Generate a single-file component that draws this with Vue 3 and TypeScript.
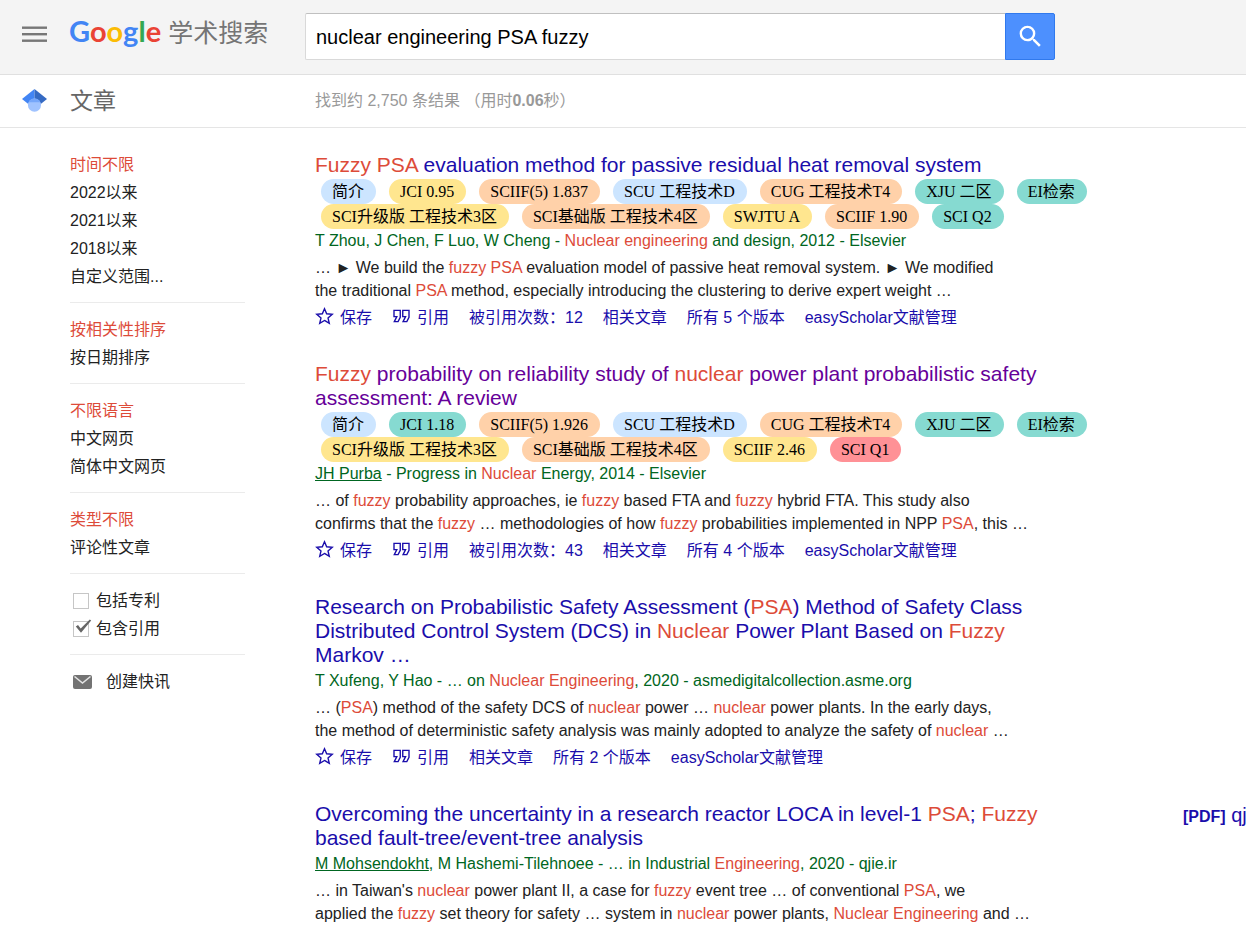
<script setup lang="ts">
interface Tag { label: string; tone: 'blue' | 'yellow' | 'orange' | 'teal' | 'pink' }
interface Result {
  title: string[]
  visited?: boolean
  tags?: Tag[]
  byline: string
  snippet: string[]
  actions?: string[]
  pdf?: string
}
interface Part { text: string; kind: '' | 'hl' | 'author' }

const query = 'nuclear engineering PSA fuzzy'
const logo = [['G', 'b'], ['o', 'r'], ['o', 'y'], ['g', 'b'], ['l', 'g'], ['e', 'r']]

const filterGroups: string[][] = [
  ['时间不限', '2022以来', '2021以来', '2018以来', '自定义范围...'],
  ['按相关性排序', '按日期排序'],
  ['不限语言', '中文网页', '简体中文网页'],
  ['类型不限', '评论性文章'],
]

const results: Result[] = [
  {
    title: ['*Fuzzy PSA* evaluation method for passive residual heat removal system'],
    tags: [
      { label: '简介', tone: 'blue' },
      { label: 'JCI 0.95', tone: 'yellow' },
      { label: 'SCIIF(5) 1.837', tone: 'orange' },
      { label: 'SCU 工程技术D', tone: 'blue' },
      { label: 'CUG 工程技术T4', tone: 'orange' },
      { label: 'XJU 二区', tone: 'teal' },
      { label: 'EI检索', tone: 'teal' },
      { label: 'SCI升级版 工程技术3区', tone: 'yellow' },
      { label: 'SCI基础版 工程技术4区', tone: 'orange' },
      { label: 'SWJTU A', tone: 'yellow' },
      { label: 'SCIIF 1.90', tone: 'orange' },
      { label: 'SCI Q2', tone: 'teal' },
    ],
    byline: 'T Zhou, J Chen, F Luo, W Cheng - *Nuclear engineering* and design, 2012 - Elsevier',
    snippet: [
      '… ► We build the *fuzzy PSA* evaluation model of passive heat removal system. ► We modified',
      'the traditional *PSA* method, especially introducing the clustering to derive expert weight …',
    ],
    actions: ['被引用次数：12', '相关文章', '所有 5 个版本', 'easyScholar文献管理'],
  },
  {
    title: ['*Fuzzy* probability on reliability study of *nuclear* power plant probabilistic safety', 'assessment: A review'],
    visited: true,
    tags: [
      { label: '简介', tone: 'blue' },
      { label: 'JCI 1.18', tone: 'teal' },
      { label: 'SCIIF(5) 1.926', tone: 'orange' },
      { label: 'SCU 工程技术D', tone: 'blue' },
      { label: 'CUG 工程技术T4', tone: 'orange' },
      { label: 'XJU 二区', tone: 'teal' },
      { label: 'EI检索', tone: 'teal' },
      { label: 'SCI升级版 工程技术3区', tone: 'yellow' },
      { label: 'SCI基础版 工程技术4区', tone: 'orange' },
      { label: 'SCIIF 2.46', tone: 'yellow' },
      { label: 'SCI Q1', tone: 'pink' },
    ],
    byline: '_JH Purba_ - Progress in *Nuclear* Energy, 2014 - Elsevier',
    snippet: [
      '… of *fuzzy* probability approaches, ie *fuzzy* based FTA and *fuzzy* hybrid FTA. This study also',
      'confirms that the *fuzzy* … methodologies of how *fuzzy* probabilities implemented in NPP *PSA*, this …',
    ],
    actions: ['被引用次数：43', '相关文章', '所有 4 个版本', 'easyScholar文献管理'],
  },
  {
    title: [
      'Research on Probabilistic Safety Assessment (*PSA*) Method of Safety Class',
      'Distributed Control System (DCS) in *Nuclear* Power Plant Based on *Fuzzy*',
      'Markov …',
    ],
    byline: 'T Xufeng, Y Hao - … on *Nuclear Engineering*, 2020 - asmedigitalcollection.asme.org',
    snippet: [
      '… (*PSA*) method of the safety DCS of *nuclear* power … *nuclear* power plants. In the early days,',
      'the method of deterministic safety analysis was mainly adopted to analyze the safety of *nuclear* …',
    ],
    actions: ['相关文章', '所有 2 个版本', 'easyScholar文献管理'],
  },
  {
    title: ['Overcoming the uncertainty in a research reactor LOCA in level-1 *PSA*; *Fuzzy*', 'based fault-tree/event-tree analysis'],
    byline: '_M Mohsendokht_, M Hashemi-Tilehnoee - … in Industrial *Engineering*, 2020 - qjie.ir',
    snippet: [
      "… in Taiwan's *nuclear* power plant II, a case for *fuzzy* event tree … of conventional *PSA*, we",
      'applied the *fuzzy* set theory for safety … system in *nuclear* power plants, *Nuclear Engineering* and …',
    ],
    pdf: 'qjie.ir',
  },
]

// *text* marks a search-term highlight, _text_ a linked author
function parts(source: string): Part[] {
  return source.split(/(\*[^*]+\*|_[^_]+_)/).filter(Boolean).map((s): Part => {
    if (s[0] === '*') return { text: s.slice(1, -1), kind: 'hl' }
    if (s[0] === '_') return { text: s.slice(1, -1), kind: 'author' }
    return { text: s, kind: '' }
  })
}
</script>

<template>
  <div class="page">
    <header class="top">
      <div class="brand">
        <button class="menu" type="button" aria-label="菜单">
          <svg width="25" height="17" viewBox="0 0 25 17" fill="#777"><rect y="0.5" width="25" height="2.4" /><rect y="7" width="25" height="2.4" /><rect y="13.5" width="25" height="2.4" /></svg>
        </button>
        <a class="logo" href="#"><span class="google"><span v-for="(l, i) in logo" :key="i" :class="l[1]">{{ l[0] }}</span></span><span class="scholar">学术搜索</span></a>
      </div>
      <form class="search" @submit.prevent>
        <input type="text" :value="query" aria-label="搜索" />
        <button type="submit" aria-label="搜索">
          <svg width="29" height="29" viewBox="0 0 24 24" fill="#fff"><path d="M15.5 14h-.79l-.28-.27A6.471 6.471 0 0 0 16 9.5 6.5 6.5 0 1 0 9.5 16c1.61 0 3.09-.59 4.23-1.57l.27.28v.79l5 4.99L20.49 19l-4.99-5zm-6 0C7.01 14 5 11.99 5 9.5S7.01 5 9.5 5 14 7.01 14 9.5 11.99 14 9.5 14z" /></svg>
        </button>
      </form>
    </header>

    <div class="sub">
      <div class="section">
        <svg width="25" height="23" viewBox="0 0 512 471">
          <path fill="#4285f4" d="M256 411L0 203 256 0z" />
          <path fill="#356ac3" d="M256 411l256-208L256 0z" />
          <circle fill="#a0c3ff" cx="256" cy="330" r="135" />
          <path fill="#76a7fa" d="M134 271c22-46 68-77 122-77s100 31 122 77z" />
        </svg>
        <h1>文章</h1>
      </div>
      <p class="stats">找到约 2,750 条结果 （用时<b>0.06</b>秒）</p>
    </div>

    <div class="body">
      <nav class="side">
        <ul v-for="(group, g) in filterGroups" :key="g">
          <li v-for="(item, i) in group" :key="item"><a href="#" :class="{ current: i === 0 }">{{ item }}</a></li>
        </ul>
        <ul>
          <li><label class="check"><input type="checkbox" /><span>包括专利</span></label></li>
          <li>
            <label class="check"><input type="checkbox" checked /><svg class="tick" width="17" height="15" viewBox="0 0 17 15"><path d="M0.8 7.6L3 6l2.7 3.6L14.8.5l1.4 1L6 13.8z" fill="#666" /></svg><span>包含引用</span></label>
          </li>
        </ul>
        <ul>
          <li>
            <a href="#" class="alert"><svg width="19" height="14" viewBox="0 0 19 14"><rect width="19" height="14" rx="2" fill="#737373" /><path d="M1.5 1.5l8 6.5 8-6.5" fill="none" stroke="#e4e4e4" stroke-width="1.6" /></svg>创建快讯</a>
          </li>
        </ul>
      </nav>

      <main>
        <article v-for="(r, n) in results" :key="n">
          <div class="entry">
            <h3>
              <a href="#" :class="{ visited: r.visited }"><span v-for="(line, i) in r.title" :key="i" class="line"><span v-for="(p, k) in parts(line)" :key="k" :class="p.kind">{{ p.text }}</span></span></a>
            </h3>
            <div v-if="r.tags" class="tags">
              <span v-for="t in r.tags" :key="t.label" :class="['tag', t.tone]">{{ t.label }}</span>
            </div>
            <div class="byline">
              <template v-for="(p, k) in parts(r.byline)" :key="k"><a v-if="p.kind === 'author'" href="#">{{ p.text }}</a><span v-else :class="p.kind">{{ p.text }}</span></template>
            </div>
            <div class="snippet">
              <span v-for="(line, i) in r.snippet" :key="i" class="line"><span v-for="(p, k) in parts(line)" :key="k" :class="p.kind">{{ p.text }}</span></span>
            </div>
            <div v-if="r.actions" class="actions">
              <a href="#"><svg width="19" height="20" viewBox="0 0 15 16"><path d="M7.5 11.57l3.824 2.308-1.015-4.35 3.379-2.926-4.45-.378L7.5 2.122 5.761 6.224l-4.449.378 3.379 2.926-1.015 4.35z" /></svg>保存</a>
              <a href="#"><svg width="19" height="20" viewBox="0 0 15 16"><path d="M6.5 3.5H1.5V8.5H3.75L1.75 12.5H4.75L6.5 9zM13.5 3.5H8.5V8.5H10.75L8.75 12.5H11.75L13.5 9z" /></svg>引用</a>
              <a v-for="a in r.actions" :key="a" href="#">{{ a }}</a>
            </div>
          </div>
          <a v-if="r.pdf" class="pdf" href="#"><b>[PDF]</b> {{ r.pdf }}</a>
        </article>
      </main>
    </div>
  </div>
</template>

<style>
body { margin: 0; background: #fff; }
</style>

<style scoped>
.page {
  font: 16px/24px "Liberation Sans", Arial, "Noto Sans CJK SC", sans-serif;
  color: #222;
  overflow: hidden;
}
a { color: inherit; text-decoration: none; }
ul, h1, h3, p { margin: 0; padding: 0; font-weight: normal; }
li { list-style: none; }
svg { flex: none; }

.top, .sub {
  display: grid;
  grid-template-columns: 305px minmax(0, 750px);
  align-items: center;
  box-sizing: border-box;
}
.top { height: 75px; background: #f4f4f4; border-bottom: 1px solid #e0e0e0; }
.sub { height: 53px; border-bottom: 1px solid #e5e5e5; }
.brand, .section { display: flex; align-items: center; padding-left: 22px; }
.brand { padding-bottom: 6px; }
.menu { display: flex; padding: 0; border: 0; background: none; margin-right: 22px; }
.logo { display: flex; align-items: baseline; gap: 7px; padding-bottom: 4px; line-height: 40px; white-space: nowrap; }
.google { font-family: Lato, sans-serif; font-size: 29px; font-weight: bold; }
.b { color: #4285f4; }
.r { color: #ea4335; }
.y { color: #fbbc05; }
.g { color: #34a853; }
.scholar { font-size: 25px; color: #757575; }

.search { display: flex; height: 47px; margin-bottom: 2px; }
.search input {
  flex: 1;
  min-width: 0;
  box-sizing: border-box;
  padding: 2px 10px 0;
  border: 1px solid #d9d9d9;
  border-top-color: #c0c0c0;
  border-right: 0;
  border-radius: 2px 0 0 2px;
  font: 20px "Liberation Sans", Arial, sans-serif;
  color: #000;
  background: #fff;
  outline: 0;
}
.search button {
  display: flex;
  align-items: center;
  justify-content: center;
  width: 50px;
  padding: 0;
  border: 1px solid #3079ed;
  border-radius: 0 2px 2px 0;
  background: #4d90fe;
}
.section { gap: 23px; }
.section svg { margin-bottom: 2px; }
h1 { font-size: 23px; line-height: 30px; color: #666; }
.stats { padding-left: 10px; color: #999; }

.body { display: grid; grid-template-columns: 175px minmax(0, 1fr); gap: 70px; padding-left: 70px; }
.side { padding-top: 23px; line-height: 28px; }
.side ul + ul { border-top: 1px solid #ebebeb; margin-top: 11px; padding-top: 13px; }
.current, .hl { color: #dd4b39; }
.check { display: flex; align-items: center; position: relative; }
.check input {
  appearance: none;
  box-sizing: border-box;
  width: 16px;
  height: 16px;
  margin: 0 7px 0 3px;
  border: 1px solid #c6c6c6;
  background: #fff;
}
.tick { position: absolute; left: 5px; top: 4px; }
.alert { display: flex; align-items: center; gap: 14px; padding-left: 3px; }

main { padding-top: 25px; }
article { display: flex; margin-bottom: 33px; }
.entry { flex: 0 0 800px; margin-right: 68px; }
.line { display: block; white-space: nowrap; }
h3 { font-size: 21px; line-height: 24px; color: #1a0dab; margin-bottom: 2px; }
.visited { color: #609; }
.tags {
  display: flex;
  flex-wrap: wrap;
  column-gap: 13px;
  padding-left: 6px;
  font: 16px/25px "Liberation Serif", "Times New Roman", "Noto Sans CJK SC", serif;
  color: #000;
}
.tag { height: 25px; padding: 0 12px 0 11px; border-radius: 13px; white-space: nowrap; }
.blue { background: #cce5ff; }
.yellow { background: #ffe68f; }
.orange { background: #ffd1a9; }
.teal { background: #86dad1; }
.pink { background: #ff9196; }
.byline { color: #006621; white-space: nowrap; }
.byline a { text-decoration: underline; }
.snippet { margin-top: 3px; line-height: 23px; }
.actions { display: flex; gap: 20px; margin-top: 4px; line-height: 23px; color: #1a0dab; white-space: nowrap; }
.actions a { display: flex; align-items: center; gap: 6px; }
.actions svg { margin-bottom: 3px; }
.actions path { fill: none; stroke: #1a0dab; stroke-width: 1.1; }
.pdf { padding-top: 1px; color: #1a0dab; white-space: nowrap; font-size: 20px; }
.pdf b { font-size: 16px; }
</style>
